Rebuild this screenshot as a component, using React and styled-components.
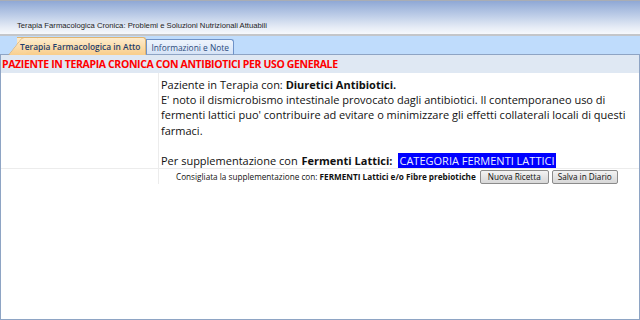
import React from "react";
import styled, { createGlobalStyle } from "styled-components";

const Global = createGlobalStyle`
  html, body { margin: 0; padding: 0; background: #ffffff; }
  body { width: 640px; height: 320px; overflow: hidden; font-family: "Liberation Sans", Arial, sans-serif; }
`;

const Page = styled.div`
  width: 640px;
  height: 320px;
  display: flex;
  flex-direction: column;
`;

const TitleBar = styled.div`
  height: 29px;
  border-top: 1px solid #a9adb4;
  border-bottom: 2px solid #c4c6c9;
  background: linear-gradient(#8fa8d5 0%, #b9cae6 40%, #e6ecf6 80%, #f7f9fc 100%);
  display: flex;
  align-items: flex-end;
  padding: 0 0 4px 17px;
  box-sizing: content-box;
`;

const Title = styled.span`
  font-family: "Liberation Sans", Arial, sans-serif;
  font-size: 7.7px;
  line-height: 9px;
  color: #1d1d1d;
`;

const TabStrip = styled.div`
  height: 18px;
  background: #bfdcfc;
  border-bottom: 1px solid #8ea4c4;
  display: flex;
  align-items: flex-end;
  padding-left: 17px;
`;

const Tab = styled.div`
  position: relative;
  height: ${(p) => (p.$active ? 16 : 14)}px;
  margin-bottom: -1px;
  display: flex;
  align-items: center;
  padding: 0 ${(p) => (p.$active ? 5 : 4)}px 0 ${(p) => (p.$active ? 3 : 4)}px;
  font-family: "Open Sans", "Noto Sans", sans-serif;
  font-size: 8.4px;
  font-weight: ${(p) => (p.$active ? 600 : 400)};
  color: ${(p) => (p.$active ? "#1f3d6b" : "#2c4b7d")};
  background: ${(p) =>
    p.$active
      ? "linear-gradient(#fdeccd, #f9cf8e)"
      : "linear-gradient(#eef4fc, #d5e3f7)"};
  border: 1px solid ${(p) => (p.$active ? "#e0b471" : "#6f93c9")};
  border-bottom: ${(p) => (p.$active ? "1px solid #f9cf8e" : "1px solid #8ea4c4")};
  border-left: ${(p) => (p.$active ? "none" : "1px solid #6f93c9")};
  border-radius: 0 3px 0 0;
  z-index: ${(p) => (p.$active ? 2 : 1)};
  white-space: nowrap;

  ${(p) =>
    p.$active &&
    `
    &::before {
      content: "";
      position: absolute;
      left: -9px;
      top: -1px;
      bottom: -1px;
      width: 16px;
      background: linear-gradient(#fdeccd, #f9cf8e);
      border-left: 1px solid #e0b471;
      border-top: 1px solid #e0b471;
      border-radius: 3px 0 0 0;
      transform: skewX(-38deg);
      transform-origin: bottom left;
      z-index: -1;
    }
  `}
`;

const TabLabel = styled.span`
  position: relative;
`;

const Panel = styled.div`
  flex: 1;
  border: 1px solid #8ea4c4;
  border-top: none;
  display: flex;
  flex-direction: column;
`;

const Alert = styled.div`
  height: 18px;
  background: #dfe8f3;
  display: flex;
  align-items: center;
  padding-left: 1px;
  font-family: "Open Sans", "Noto Sans", sans-serif;
  font-size: 10.5px;
  letter-spacing: -0.37px;
  font-weight: 700;
  color: #ff0000;
  white-space: nowrap;
`;

const Grid = styled.div`
  display: grid;
  grid-template-columns: 158px 1fr;
  grid-template-rows: 96px 15px;
`;

const Side = styled.div`
  border-right: 1px solid #ececec;
  border-bottom: ${(p) => (p.$last ? "none" : "1px solid #ececec")};
`;

const Body = styled.div`
  border-bottom: 1px solid #ececec;
  padding: 4px 6px 0 2px;
  font-family: "Open Sans", "Noto Sans", sans-serif;
  font-size: 11px;
  line-height: 15.2px;
  color: #111;
`;

const Line = styled.div`
  white-space: nowrap;
  ${(p) => p.$gap && "margin-top: 14.8px;"}
`;

const Bold = styled.b`
  font-weight: 700;
  margin-left: ${(p) => p.$ml || 0}px;
`;

const Highlight = styled.span`
  background: #0000ff;
  color: #e8ecff;
  margin-left: 6px;
  padding: 0 1px;
`;

const Footer = styled.div`
  display: flex;
  align-items: flex-start;
  padding-left: 17px;
  padding-top: 1px;
  font-family: "Open Sans", "Noto Sans", sans-serif;
  font-size: 8.2px;
  line-height: 13px;
  color: #111;
  white-space: nowrap;
`;

const Button = styled.button`
  height: 14px;
  margin-left: ${(p) => p.$ml}px;
  padding: 0 ${(p) => p.$px}px;
  font-family: "Open Sans", "Noto Sans", sans-serif;
  font-size: 8.2px;
  color: #111;
  background: linear-gradient(#f3f3f3, #e4e4e4 50%, #d8d8d8);
  border: 1px solid #8b8b8b;
  border-radius: 2px;
  line-height: 12px;
  cursor: default;
`;

export default function App() {
  return (
    <Page>
      <Global />
      <TitleBar>
        <Title>Terapia Farmacologica Cronica: Problemi e Soluzioni Nutrizionali Attuabili</Title>
      </TitleBar>
      <TabStrip>
        <Tab $active>
          <TabLabel>Terapia Farmacologica in Atto</TabLabel>
        </Tab>
        <Tab>Informazioni e Note</Tab>
      </TabStrip>
      <Panel>
        <Alert>PAZIENTE IN TERAPIA CRONICA CON ANTIBIOTICI PER USO GENERALE</Alert>
        <Grid>
          <Side />
          <Body>
            <Line>
              Paziente in Terapia con: <Bold>Diuretici Antibiotici.</Bold>
            </Line>
            <Line>
              E' noto il dismicrobismo intestinale provocato dagli antibiotici. Il contemporaneo uso di
            </Line>
            <Line>
              fermenti lattici puo' contribuire ad evitare o minimizzare gli effetti collaterali locali di questi
            </Line>
            <Line>farmaci.</Line>
            <Line $gap>
              Per supplementazione con <Bold $ml={1}>Fermenti Lattici:</Bold>
              <Highlight>CATEGORIA FERMENTI LATTICI</Highlight>
            </Line>
          </Body>
          <Side $last />
          <Footer>
            Consigliata la supplementazione con:&nbsp;<Bold>FERMENTI Lattici e/o Fibre prebiotiche</Bold>
            <Button $ml={4} $px={7}>Nuova Ricetta</Button>
            <Button $ml={3} $px={5}>Salva in Diario</Button>
          </Footer>
        </Grid>
      </Panel>
    </Page>
  );
}
